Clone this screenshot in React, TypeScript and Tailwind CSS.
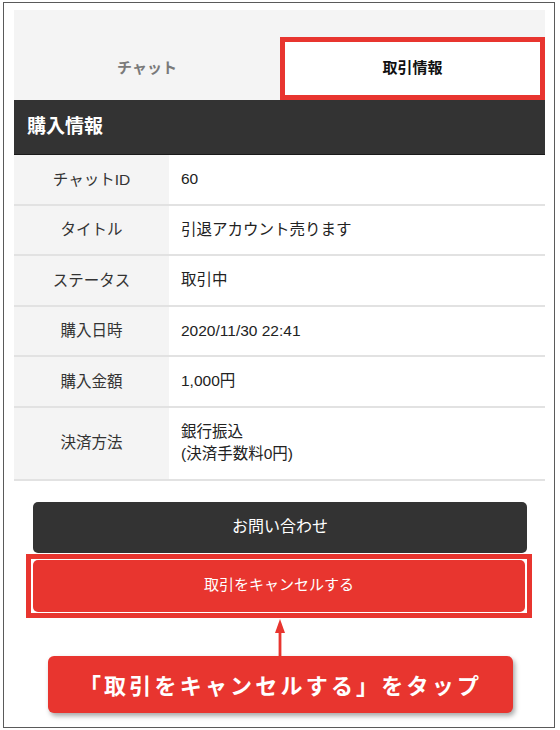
import React from "react";

const JP = "font-['Liberation_Sans','Noto_Sans_CJK_JP',sans-serif]";

const rows: { label: string; value: React.ReactNode; tall?: boolean }[] = [
  { label: "チャットID", value: "60" },
  { label: "タイトル", value: "引退アカウント売ります" },
  { label: "ステータス", value: "取引中" },
  { label: "購入日時", value: "2020/11/30 22:41" },
  { label: "購入金額", value: "1,000円" },
  {
    label: "決済方法",
    value: (
      <>
        銀行振込
        <br />
        (決済手数料0円)
      </>
    ),
    tall: true,
  },
];

export default function App() {
  return (
    <div className={`bg-white w-[560px] h-[730px] pl-[3px] pt-[2px] ${JP}`}>
      <div className="w-[552px] h-[726px] border border-[#5a5a5a] pt-[7px] pl-[10px]">
        <div className="w-[531px] flex flex-col">
          {/* Tabs */}
          <div className="h-[90px] bg-[#f4f4f4] grid grid-cols-[266px_265px]">
            <div className="mt-[27px] h-[63px] flex items-center justify-center text-[15px] font-bold text-[#7a7a7a]">
              チャット
            </div>
            <div className="mt-[27px] h-[63px] flex items-center justify-center bg-white border-[5px] border-[#e8352f] text-[15px] font-bold text-[#111]">
              取引情報
            </div>
          </div>

          {/* Header */}
          <div className="h-[55px] bg-[#333333] flex items-center px-[13px] text-white text-[19px] font-bold border-b border-[#1a1a1a]">
            購入情報
          </div>

          {/* Table */}
          <div className="flex flex-col">
            {rows.map((r) => (
              <div
                key={r.label}
                className={`grid grid-cols-[155px_1fr] border-b-2 border-[#e2e2e2] ${
                  r.tall ? "h-[73px]" : "h-[50.5px]"
                }`}
              >
                <div className="bg-[#f4f4f4] flex items-center justify-center text-[15.5px] text-[#333]">
                  {r.label}
                </div>
                <div className="flex items-center pl-[12px] text-[15.5px] text-[#222] leading-[22px]">
                  <div>{r.value}</div>
                </div>
              </div>
            ))}
          </div>

          {/* Contact button */}
          <div className="mt-[21px] ml-[19px] w-[494px] h-[51px] rounded-[5px] bg-[#333333] flex items-center justify-center text-white text-[16px]">
            お問い合わせ
          </div>

          {/* Cancel button with annotation */}
          <div className="mt-px ml-[12px] w-[506px] h-[64px] border-[5px] border-[#e8352f] px-[2px] py-px bg-white">
            <div className="h-full rounded-[5px] bg-[#e8352f] flex items-center justify-center text-white text-[15px]">
              取引をキャンセルする
            </div>
          </div>

          {/* Arrow */}
          <div className="ml-[260px] h-[38px] w-[12px]">
            <svg width="12" height="38" viewBox="0 0 12 38">
              <polygon points="6,1 1,15 11,15" fill="#e8352f" />
              <rect x="4.6" y="14" width="2.8" height="24" fill="#e8352f" />
            </svg>
          </div>

          {/* Callout */}
          <div className="ml-[34px] w-[465px] h-[57px] rounded-[6px] bg-[#e8352f] shadow-[2px_3px_5px_rgba(0,0,0,0.35)] flex items-center justify-center">
            <span className="font-['Noto_Sans_CJK_JP',sans-serif] text-white text-[22px] font-bold tracking-[3.2px] leading-none">
              「取引をキャンセルする」をタップ
            </span>
          </div>
        </div>
      </div>
    </div>
  );
}
